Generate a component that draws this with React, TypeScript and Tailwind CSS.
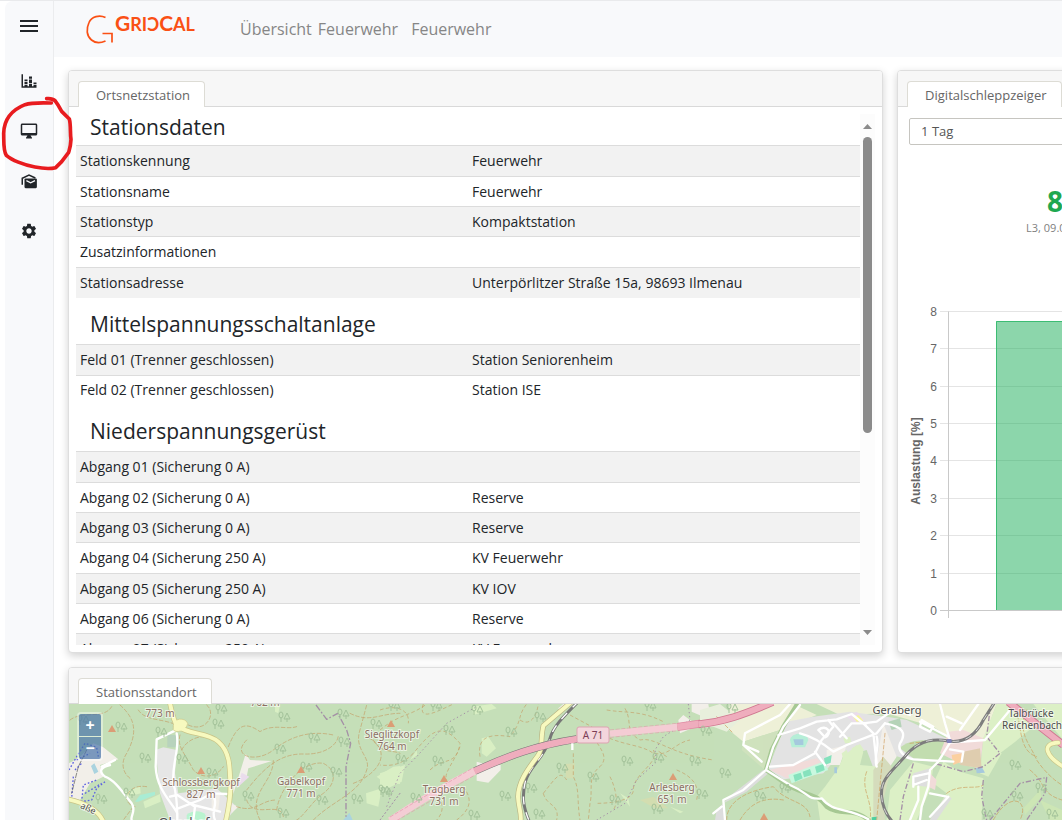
import React from 'react';
import { MdMenu, MdSettings } from 'react-icons/md';

type Row = {
  label: string;
  value: string;
};

type CardProps = {
  title: string;
  className?: string;
  children: React.ReactNode;
};

const stationRows: Row[] = [
  { label: 'Stationskennung', value: 'Feuerwehr' },
  { label: 'Stationsname', value: 'Feuerwehr' },
  { label: 'Stationstyp', value: 'Kompaktstation' },
  { label: 'Zusatzinformationen', value: '' },
  { label: 'Stationsadresse', value: 'Unterpörlitzer Straße 15a, 98693 Ilmenau' },
];

const mediumVoltageRows: Row[] = [
  { label: 'Feld 01 (Trenner geschlossen)', value: 'Station Seniorenheim' },
  { label: 'Feld 02 (Trenner geschlossen)', value: 'Station ISE' },
];

const lowVoltageRows: Row[] = [
  { label: 'Abgang 01 (Sicherung 0 A)', value: '' },
  { label: 'Abgang 02 (Sicherung 0 A)', value: 'Reserve' },
  { label: 'Abgang 03 (Sicherung 0 A)', value: 'Reserve' },
  { label: 'Abgang 04 (Sicherung 250 A)', value: 'KV Feuerwehr' },
  { label: 'Abgang 05 (Sicherung 250 A)', value: 'KV IOV' },
  { label: 'Abgang 06 (Sicherung 0 A)', value: 'Reserve' },
  { label: 'Abgang 07 (Sicherung 250 A)', value: 'KV Feuerwehr' },
];

const StackedBarIcon = () => (
  <svg viewBox="0 0 24 24" className="size-[18px]" fill="currentColor">
    <path d="M22,21H2V3H4V19H6V17H10V19H12V16H16V19H18V17H22V21M18,14H22V16H18V14M12,6H16V9H12V6M16,15H12V10H16V15M6,10H10V12H6V10M10,16H6V13H10V16Z" />
  </svg>
);

const MonitorIcon = () => (
  <svg viewBox="0 0 24 24" className="size-[18px]" fill="currentColor">
    <path
      fillRule="evenodd"
      d="M21 2H3C1.900 2 1 2.900 1 4v12c0 1.100.9 2 2 2h7l-2 3v1h8v-1l-2-3h7c1.100 0 2-.9 2-2V4c0-1.100-.9-2-2-2zM21 14.500H3V4h18v10.500z"
    />
  </svg>
);

const MailboxIcon = () => (
  <svg viewBox="0 0 24 24" className="size-[18px]" fill="none" stroke="currentColor">
    <path d="M3 17V8.300L12 4l8.500 4" strokeWidth="2" />
    <rect x="6" y="8.500" width="16.500" height="13" rx="1.500" fill="currentColor" stroke="none" />
    <path d="M8.500 11.500l5.700 3 5.800-3" stroke="#f8f9fb" strokeWidth="1.600" />
  </svg>
);

const Logo = () => (
  <svg className="h-9 w-[112px] overflow-visible" fill="none" role="img" aria-label="GridCal">
    <path
      d="M19.500 6.500C13.500 3.500 5.500 5.500 3 11.500C0 18 .5 25 5.500 29C9.500 32.500 15 32 19.500 30M16.500 22.500h9.500v9"
      stroke="#fa5014"
      strokeWidth="1.700"
    />
    <text
      x="29"
      y="20"
      fill="#fa5014"
      className="font-['Lato','Noto_Sans',sans-serif] text-[18px] font-bold">
      <tspan className="text-[21px]">G</tspan>RIƆ
      <tspan className="text-[21px]">C</tspan>AL
    </text>
  </svg>
);

const Sidebar = () => {
  const item = 'flex h-[50px] w-full items-center justify-center';
  return (
    <nav className="w-[49px] shrink-0 rounded-tl-lg border-r border-[#ebecee] bg-[#f8f9fb] text-[#212529]">
      <button className={`${item} mb-[5px]`} aria-label="Menü">
        <MdMenu className="size-6" />
      </button>
      <button className={item} aria-label="Auswertung">
        <StackedBarIcon />
      </button>
      <button className={item} aria-label="Übersicht">
        <MonitorIcon />
      </button>
      <button className={item} aria-label="Nachrichten">
        <MailboxIcon />
      </button>
      <button className={item} aria-label="Einstellungen">
        <MdSettings className="size-[18px]" />
      </button>
    </nav>
  );
};

const Card: React.FC<CardProps> = (props) => (
  <section
    className={`${props.className ?? ''} shrink-0 overflow-hidden rounded border border-[#dedede] bg-white shadow-[0_3px_8px_rgba(0,0,0,0.18)]`}>
    <div className="flex h-9 items-end border-b border-[#d9d9d9] bg-[#f7f7f7] pl-[9px]">
      <h2 className="-mb-px flex h-[26px] items-center rounded-t border border-b-0 border-[#dddcd5] bg-white pt-0.5 pr-3.5 pl-[17px] text-[13px] text-[#666]">
        {props.title}
      </h2>
    </div>
    {props.children}
  </section>
);

const RowTable: React.FC<{ title: string; rows: Row[]; first?: boolean }> = (props) => (
  <>
    <h3
      className={`flex items-center pl-3.5 text-[21px] leading-6 text-[#212529] ${
        props.first ? 'h-[31px] pb-1.5' : 'h-[46px] pt-1.5'
      }`}>
      {props.title}
    </h3>
    <table className="w-full table-fixed text-sm text-[#212529]">
      <tbody>
        {props.rows.map((row) => (
          <tr
            key={row.label}
            className="h-[30px] border-t border-[#dcdcdc] first:h-[31px] odd:bg-[#f2f2f2] nth-4:h-[31px]">
            <td className="px-1 py-0">{row.label}</td>
            <td className="px-1 py-0">{row.value}</td>
          </tr>
        ))}
      </tbody>
    </table>
  </>
);

const Scrollbar = () => (
  <div className="flex w-[15px] shrink-0 flex-col items-center bg-[#fcfcfc] py-2.5">
    <svg className="h-[5px] w-[9px]" fill="#8b8b8b">
      <path d="M4.500 0L9 5H0z" />
    </svg>
    <div className="mt-2 h-[58%] w-[9px] rounded-full bg-[#8b8b8b]" />
    <svg className="mt-auto h-[5px] w-[9px]" fill="#8b8b8b">
      <path d="M4.500 5L9 0H0z" />
    </svg>
  </div>
);

const LoadChart = () => {
  const ticks = [8, 7, 6, 5, 4, 3, 2, 1, 0];
  const yOf = (v: number) => Math.round(310 - v * 37.4) + 0.5;
  return (
    <svg className="h-[336px] w-full font-['Liberation_Sans',Arial,sans-serif] text-xs">
      {ticks.map((v) => (
        <g key={v}>
          <line
            x1="42"
            x2="100%"
            y1={yOf(v)}
            y2={yOf(v)}
            stroke={v === 0 ? '#c9c9c9' : '#e4e4e4'}
          />
          <text x="39" y={yOf(v) + 4} fill="#666" textAnchor="end">
            {v}
          </text>
        </g>
      ))}
      <line x1="50.500" x2="50.500" y1={yOf(8)} y2="318" stroke="#c9c9c9" />
      <rect x="98" y="21" width="100%" height="289" fill="#1aad57" fillOpacity="0.500" />
      <path d="M98.500 310V21.500H900" fill="none" stroke="#3cbc73" />
      <text transform="translate(22 161) rotate(-90)" fill="#666" textAnchor="middle" fontWeight="bold">
        Auslastung [%]
      </text>
    </svg>
  );
};

const treeSpots = [
  [83, 720], [221, 709], [284, 717], [218, 724], [343, 714], [161, 732], [145, 758], [182, 759],
  [212, 773], [280, 749], [306, 767], [336, 772], [248, 796], [101, 799], [129, 793], [322, 800],
  [357, 799], [384, 790], [283, 813], [376, 724], [344, 742], [121, 727], [314, 738], [394, 706],
  [436, 706], [477, 710], [449, 730], [511, 732], [540, 717], [401, 759], [438, 761], [416, 798],
  [386, 792], [505, 796], [562, 768], [593, 777], [615, 800], [531, 788], [627, 761], [658, 758],
  [695, 761], [702, 794], [650, 706], [539, 814], [474, 815], [657, 809], [725, 773], [760, 796],
  [785, 788], [706, 731], [1015, 765], [1017, 796], [1041, 788], [1052, 814], [987, 814], [732, 708],
];

const peaks = [
  [112, 729], [201, 771], [301, 770], [391, 724], [444, 779], [673, 777], [764, 817],
];

const labels = [
  { x: 160, y: 717, text: '773 m' },
  { x: 265, y: 706, text: '762 m' },
  { x: 201, y: 786, text: 'Schlossbergkopf' },
  { x: 201, y: 798, text: '827 m' },
  { x: 301, y: 785, text: 'Gabelkopf' },
  { x: 301, y: 797, text: '771 m' },
  { x: 392, y: 738, text: 'Sieglitzkopf' },
  { x: 392, y: 750, text: '764 m' },
  { x: 444, y: 793, text: 'Tragberg' },
  { x: 444, y: 805, text: '731 m' },
  { x: 672, y: 791, text: 'Arlesberg' },
  { x: 672, y: 803, text: '651 m' },
];

// Geometry of each map section is kept on a three times finer grid.
const MapWest = () => (
  <g transform="translate(-9 -44) scale(0.33333)" fill="none" strokeLinecap="round" strokeLinejoin="round">
    <path d="M27 310L60 290L100 250L130 262L175 298L120 315L130 350L90 370L60 420L27 410z" fill="#f2efe9" />
    <path d="M287 270L310 262L350 270L345 340L355 400L470 385L530 440L500 480H330L300 400z" fill="#e6e6e6" />
    <path d="M520 402L545 320L557 282L570 300L635 303L565 325L560 350L520 372z" fill="#f2efe9" />
    <path d="M455 400L480 405L475 450L455 455zM515 432L535 440L515 460z" fill="#f2efe9" />
    <path d="M545 338L568 350L530 385z" fill="#eadcec" />
    <path d="M322 225L350 225L348 262L322 262z" fill="#b9d3bd" />
    <path d="M225 425L240 405L285 395L285 405L235 425z" fill="#a9ecd4" />
    <path d="M190 400L240 378L242 400L200 412zM250 425L300 402L302 425L255 445z" fill="#d9efc4" />
    <path d="M950 350L1000 320L1020 318V372L975 370zM918 400L965 385L955 440L920 430zM645 135L660 135L655 160L645 155z" fill="#d9efc4" />
    <path d="M985 480L1020 455V480z" fill="#f5c6cf" />
    <path d="M850 480L868 458L878 480zM93 318L103 310L115 335L103 342z" fill="#aad3df" />
    <path d="M380 465C395 450 425 450 437 465L435 480H380z" fill="#b9f3cf" />
    <path d="M27 330L50 290L75 250L110 262L115 290M40 350L35 415M135 365L110 385L95 420L65 425L70 375L110 360M50 300L90 280M75 400L125 370M45 330L65 310" stroke="#5c62e0" strokeWidth="4" strokeLinecap="butt" strokeDasharray="5 6" />
    <path d="M80 270L55 320L35 400" stroke="#555" strokeWidth="2" strokeDasharray="14 5" />
    <g stroke="#c4995f" strokeWidth="2" strokeDasharray="11 7" opacity="0.900">
      <path d="M180 135C225 175 235 215 200 280C180 310 190 340 210 355M385 195C440 220 470 160 440 135" />
      <path d="M235 150C260 190 330 170 370 210M360 225C350 260 375 280 400 330C430 360 470 350 490 320" />
      <path d="M365 270C380 240 420 220 460 235M505 260C530 200 550 180 600 215C640 190 680 210 710 200" />
      <path d="M560 240C510 290 590 310 640 270C690 230 750 210 820 225M560 390C600 340 650 280 730 282C800 285 835 250 835 225" />
      <path d="M600 480C560 400 640 370 640 300M650 450C660 380 730 300 790 310C830 330 830 370 790 400C760 420 730 470 710 480" />
      <path d="M560 420C580 480 660 420 670 470M760 480C820 420 900 400 920 330C935 290 880 270 900 210L920 135" />
      <path d="M880 370C960 340 1000 270 920 230M870 160C930 190 960 160 1020 160M940 240C960 280 1000 270 1020 280" />
      <path d="M530 440C590 460 600 420 650 420M220 440L190 480M30 180C70 150 130 180 155 140M260 380C200 370 180 430 225 440" />
    </g>
    <path d="M768 135L800 178L833 160L860 210L872 250L858 320V470" stroke="#a48fa6" strokeWidth="4" strokeLinecap="butt" strokeDasharray="20 6 5 6" />
    <path d="M960 480L1020 400" stroke="#a48fa6" strokeWidth="3" strokeDasharray="4 8" />
    <g stroke="#fff" strokeWidth="7">
      <path d="M345 212L290 238L287 320C290 390 335 425 352 460V480M350 220C360 270 335 310 340 370C350 400 352 440 352 480" />
      <path d="M352 405L405 440L400 480M355 445L420 420L455 400L500 402M400 435L480 455M455 400C480 430 450 450 465 480M330 410L352 405" />
      <path d="M150 315C130 320 110 330 135 350C165 360 190 400 215 430C230 450 210 470 215 480M165 300L125 320" />
    </g>
    <g stroke="#c9c487" strokeWidth="16">
      <path d="M330 130C338 165 340 180 350 195C380 225 440 215 475 245C510 275 510 320 511 380C512 420 505 450 497 485" />
      <path d="M25 418C80 430 115 450 130 485" />
    </g>
    <path d="M340 195C340 175 375 170 383 190C380 215 345 220 340 210z" fill="#f7f9bf" stroke="#c9c487" strokeWidth="2" />
    <g stroke="#f7f9bf" strokeWidth="12">
      <path d="M330 130C338 165 340 180 350 195C380 225 440 215 475 245C510 275 510 320 511 380C512 420 505 450 497 485" />
      <path d="M25 418C80 430 115 450 130 485" />
    </g>
  </g>
);

const MapCenter = () => (
  <g transform="translate(311 -14) scale(0.33333)" fill="none" strokeLinejoin="round">
    <path d="M0 250L75 225L65 275L30 292L0 290zM305 145L325 140L348 175L320 200L305 190zM90 210L110 180L112 195z" fill="#d9efc4" />
    <path d="M275 50L335 42L350 55L280 75zM720 310L745 325L750 350zM870 350L910 365L900 370z" fill="#d9efc4" />
    <path d="M555 222L585 220L580 265L558 265zM780 330L820 320L865 355L825 355z" fill="#d3ddb0" />
    <path d="M290 215L325 225L362 225V240L325 278L290 272z" fill="#f2efe9" />
    <path d="M535 55L550 42L580 42L540 70zM935 42H985L988 60L965 78L935 65zM895 90L910 75L930 90L960 105L900 130z" fill="#f2efe9" />
    <g stroke="#c4995f" strokeWidth="2" strokeDasharray="11 7" opacity="0.900">
      <path d="M0 120C60 70 90 80 140 42M130 42C110 100 180 60 220 42M150 240C190 200 230 230 240 160C180 90 150 130 100 190" />
      <path d="M300 200C290 140 330 130 390 140C430 90 410 80 440 42M240 170C220 220 190 250 200 270M250 290C280 330 270 360 230 390" />
      <path d="M420 90C450 110 470 80 475 42M580 190V260C600 300 590 330 600 390M570 75L635 110C625 150 700 190 660 230C620 260 640 300 630 340L625 390" />
      <path d="M640 120C720 170 780 160 820 190C870 200 880 160 930 150M735 55C760 100 730 120 780 150C830 140 860 190 1000 210" />
      <path d="M820 180C840 220 760 250 760 300C760 330 700 340 650 340M680 60C740 70 780 60 850 95M860 200L830 180" />
      <path d="M490 310C530 260 540 240 560 270M490 310C500 350 540 340 530 390M100 190C70 220 40 230 0 225M130 320C170 280 210 350 170 390" />
      <path d="M690 260C700 280 720 330 700 360M890 240C940 260 960 290 950 330M0 60C50 42 90 60 85 100" />
    </g>
    <path d="M20 350L60 250L110 200L200 100L290 50M925 42L930 90L850 140L825 180L830 215L770 270L735 340L650 390" stroke="#a48fa6" strokeWidth="3" strokeDasharray="4 8" />
    <path d="M595 35C545 85 520 110 510 145C490 210 450 225 436 275C425 320 430 350 447 392" stroke="#777" strokeWidth="9" />
    <path d="M595 35C545 85 520 110 510 145C490 210 450 225 436 275C425 320 430 350 447 392" stroke="#fff" strokeWidth="4" strokeDasharray="24 24" />
    <path d="M575 35L490 107C480 150 490 170 475 195C450 230 415 270 414 320C415 350 425 370 422 392" stroke="#b9b583" strokeWidth="16" />
    <path d="M575 35L490 107C480 150 490 170 475 195C450 230 415 270 414 320C415 350 425 370 422 392" stroke="#f7f9bf" strokeWidth="12" />
    <path d="M30 392C100 345 190 290 285 243" stroke="#f4ccd4" strokeWidth="21" />
    <path d="M30 381L280 233M50 392L285 255M690 120L892 100M690 142L892 122" stroke="#e39aac" strokeWidth="2" strokeDasharray="12 5" />
    <path d="M285 243C380 200 470 165 590 147" stroke="#777" strokeWidth="23" />
    <path d="M283 244C380 200 470 165 592 147" stroke="#efadbd" strokeWidth="20" />
    <path d="M690 131L892 111" stroke="#f4ccd4" strokeWidth="19" />
    <path d="M892 111L1025 91" stroke="#e08ba3" strokeWidth="24" />
    <path d="M892 111L1025 91" stroke="#efadbd" strokeWidth="19" />
    <path d="M577 160V180" stroke="#fff" strokeWidth="7" />
  </g>
);

const MapEast = () => (
  <g transform="translate(631 -14) scale(0.33333)" fill="none" strokeLinecap="round" strokeLinejoin="round">
    <path d="M90 42L280 42L350 75L240 120L130 155L75 110z" fill="#eef0d8" />
    <path d="M350 42H890L850 150L760 150L700 110L560 70L420 75z" fill="#eef0d8" />
    <path d="M130 155L240 120L270 42L195 240L125 180z" fill="#cfe2bd" />
    <path d="M205 235L260 95L340 80L450 65L560 80L620 90L750 150L700 215L610 205L560 190L530 260L500 180L410 205L370 250L240 270z" fill="#e3e3e3" />
    <path d="M550 100L590 200L550 260L525 240zM380 180L440 165L420 225L380 225z" fill="#f2efe9" />
    <path d="M415 235L430 200L470 165L490 185L480 225L540 230L530 390H360L350 320L375 290z" fill="#dcf0c6" />
    <path d="M570 300L640 215L700 230L690 300L650 390H560zM730 215L780 245L850 265L845 390H690L740 310L700 280zM850 140L905 190L865 260L840 250z" fill="#dcf0c6" />
    <path d="M600 175C620 150 680 145 745 158L720 215L640 205z" fill="#c2ddb0" />
    <path d="M520 240L550 200L575 230L550 330L555 390H520z" fill="#d5dcbc" />
    <path d="M745 125L790 120L850 145L840 235L790 225L720 190z" fill="#f1dbd9" />
    <path d="M210 240L350 205L365 220L260 265zM690 250L710 270L705 300L685 290z" fill="#f1dbd9" />
    <path d="M780 225L790 185L840 175L845 235z" fill="#dfceb0" />
    <path d="M755 195L785 190L785 215L760 225z" fill="#fbd0a0" />
    <path d="M265 255L370 215L385 240L275 280z" fill="#c9f8df" />
    <path d="M280 255L302 248L308 265L285 275zM308 245L330 237L336 255L312 262zM345 230L370 222L374 240L350 250zM372 205L395 195L392 218L375 225z" fill="#86e2bd" />
    <path d="M270 150C275 125 320 125 325 150L315 172H275z" fill="#b5eed7" />
    <path d="M280 148H310V165H285zM35 65L55 58V72H38zM828 235L845 230L855 248L830 250zM403 232H411V250H403z" fill="#a6c9dd" />
    <path d="M440 80L470 65L495 90L465 100z" fill="#eadcec" />
    <path d="M460 82L475 75L490 92L470 95z" fill="#f6f59a" />
    <path d="M425 190L440 180L450 205L430 210zM455 175L480 162L492 180L470 200zM430 145L450 140L455 160L435 160z" fill="#dcf0c6" />
    <path d="M565 95L600 85L605 110L575 120z" fill="#b5d3b8" />
    <path d="M45 390L50 360L100 310L190 240L205 250L140 305L70 340L75 390z" fill="#dddddd" />
    <path d="M700 370L740 315L755 325L710 390H690zM640 250L690 235L680 290L635 285z" fill="#dedede" />
    <path d="M0 60L60 42L120 90L80 125L40 110L0 115z" fill="#e8efdc" />
    <path d="M890 42H930L1000 110L940 160L900 190L850 145z" fill="#dcf0c6" />
    <path d="M1000 42H1090V150z" fill="#dcf0c6" />
    <path d="M970 355L1020 300L1025 320L975 375zM1020 330L1086 360V390H1050z" fill="#cde6b5" />
    <g stroke="#cd9550" strokeWidth="2" strokeDasharray="11 7" opacity="0.900">
      <path d="M80 390C80 330 150 300 220 290C260 340 320 330 330 380M120 390C150 340 190 320 250 330M50 80L100 130" />
      <path d="M555 130L530 390M500 245C480 300 520 330 510 390M740 310C780 280 830 300 850 285M630 160L720 150" />
      <path d="M980 60C950 130 990 160 1010 210C1030 240 1060 270 1086 285M880 390C930 300 990 330 960 390M990 240C1040 280 1020 310 1086 330M940 42C970 100 950 180 1010 200" />
    </g>
    <path d="M710 222L790 245L850 230L900 190L860 140L870 60M850 270L845 320L860 390M640 220L610 320L600 390M870 390L960 280L1040 262L1035 310L980 390" stroke="#a48fa6" strokeWidth="4" strokeLinecap="butt" strokeDasharray="16 6 4 6" />
    <path d="M198 240L215 180L250 110L290 45M198 240L270 290C330 320 350 310 380 350C420 380 460 350 505 390" stroke="#a6c893" strokeWidth="13" />
    <g stroke="#fff" strokeWidth="7">
      <path d="M300 45L250 110L220 170L198 240L270 285C330 310 320 330 365 325C400 370 440 350 505 388" />
      <path d="M198 240L130 300L70 330L75 390M40 370L65 350M270 42L240 75L135 130L130 165L185 215M130 165L175 185" />
      <path d="M235 135L300 115L350 95L410 88L455 72L490 100L530 95L580 60L630 75M210 230L280 225L345 190L365 150L400 110L385 90" />
      <path d="M300 130C340 140 370 160 400 185L440 165L530 130L555 100M345 185L375 225M400 100L440 145M420 140L455 100L500 100M490 100L520 130L530 220" />
      <path d="M555 100C610 110 620 130 600 160C590 185 620 205 640 208L760 215M530 140C540 170 520 200 530 230M355 120C380 100 400 130 375 142z" />
      <path d="M720 42L735 100L750 150M665 90L700 110L690 125L660 110zM780 120L835 42M660 95L745 140M740 80L785 100" />
      <path d="M750 158L715 215L690 240L685 290L665 350L660 390M750 158L855 150L930 60M690 310L740 320M640 260L685 250M640 285L680 270M640 260V290M655 290L655 330L630 390M690 380L745 320M750 178L790 185L785 215" />
    </g>
    <path d="M882 40L850 90C820 150 780 158 745 153C680 140 640 165 610 205C570 250 540 270 545 320C548 355 560 375 575 392" stroke="#7d7d7d" strokeWidth="9" />
    <path d="M882 40L850 90C820 150 780 158 745 153C680 140 640 165 610 205C570 250 540 270 545 320C548 355 560 375 575 392" stroke="#fff" strokeWidth="2" strokeDasharray="18 22" />
    <rect x="740" y="147" width="15" height="12" rx="3" fill="#8082b8" />
    <path d="M515 382L530 380L528 392H515z" fill="#4fcf9f" />
    <g strokeLinecap="butt">
      <path d="M-5 103C70 95 130 75 218 36M925 36L1090 165" stroke="#cf7790" strokeWidth="23" />
      <path d="M-5 103C70 95 130 75 218 36M925 36L1090 165" stroke="#efadbd" strokeWidth="18" />
    </g>
    <path d="M1075 158C1020 160 1040 200 1090 230" stroke="#c9c487" strokeWidth="15" />
    <path d="M1075 158C1020 160 1040 200 1090 230" stroke="#f7f9bf" strokeWidth="11" />
  </g>
);

const StationMap = () => (
  <div className="relative h-[180px] overflow-hidden bg-[#c5dfb9]">
    <svg className="h-full w-full font-['Noto_Sans',sans-serif]">
      <defs>
        <g id="tree" fill="none" stroke="#a3c29a" strokeWidth="1">
          <path d="M-3 5V0M3 5V1" />
          <ellipse cx="-3" cy="-2" rx="2" ry="3" />
          <path d="M3-4L0 2h6z" />
        </g>
      </defs>
      <MapWest />
      <MapCenter />
      <MapEast />
      <g transform="translate(-69 -704)">
        {treeSpots.map(([x, y]) => (
          <use key={`${x}-${y}`} href="#tree" x={x} y={y} />
        ))}
        {peaks.map(([x, y]) => (
          <path key={`${x}-${y}`} d={`M${x - 4} ${y + 3}L${x} ${y - 4}L${x + 4} ${y + 3}z`} fill="#db9d76" />
        ))}
        <g
          className="text-[10px]"
          fill="#8c6f62"
          stroke="#fff"
          strokeOpacity="0.600"
          strokeWidth="2"
          paintOrder="stroke"
          textAnchor="middle">
          {labels.map((l) => (
            <text key={`${l.text}-${l.y}`} x={l.x} y={l.y}>
              {l.text}
            </text>
          ))}
          <g fill="#4d4d4d">
            <text x="897" y="714" className="text-[11px]">
              Geraberg
            </text>
            <text x="1031" y="717">Talbrücke</text>
            <text x="1032" y="729">Reichenbach</text>
            <text x="184" y="827" className="text-[13px]">
              Oberhof
            </text>
            <text transform="translate(87 811) rotate(25)" className="text-[9px]">
              aße
            </text>
          </g>
        </g>
        <rect x="577" y="727" width="32" height="16" rx="2" fill="#f3d6dc" stroke="#dda3b1" />
        <text x="593" y="739" fill="#7c3d56" textAnchor="middle" className="text-[10px]">
          A 71
        </text>
      </g>
    </svg>
    <div className="absolute top-2 left-2 flex flex-col gap-px rounded bg-white/40 p-0.5 text-base font-bold text-white">
      <button className="flex size-[22px] items-center justify-center rounded-t-xs bg-[#003c88]/50" aria-label="Vergrößern">
        +
      </button>
      <button className="flex size-[22px] items-center justify-center rounded-b-xs bg-[#003c88]/50" aria-label="Verkleinern">
        −
      </button>
    </div>
  </div>
);

// Freehand highlight around the monitor entry
const Marker = () => (
  <svg className="pointer-events-none absolute top-[89px] left-0 h-[90px] w-20" fill="none">
    <path
      transform="translate(0 -90) scale(0.33333)"
      d="M140 296C152 295 160 297 165 302C175 315 180 325 185 334L208 357C213 375 210 400 213 418C212 440 208 450 206 457L185 485L167 503C150 507 120 504 105 501C70 495 35 480 19 466C9 452 12 420 11 400C12 360 35 330 75 314C95 307 120 308 154 309"
      stroke="#e81c1f"
      strokeWidth="11"
      strokeLinecap="round"
      strokeLinejoin="round"
    />
  </svg>
);

const App = () => (
  <div className="relative flex h-screen overflow-hidden border-t border-[#e9eaec] bg-white pl-[5px] font-['Open_Sans',sans-serif]">
    <Sidebar />
    <div className="min-w-0 flex-1">
      <header className="flex h-14 items-center bg-[#f8f9fb] pl-8 text-base text-[#868686]">
        <Logo />
        <a href="#uebersicht" className="ml-[42px]">
          Übersicht
        </a>
        <a href="#feuerwehr" className="ml-1.5">
          Feuerwehr
        </a>
        <span className="ml-[13px]">Feuerwehr</span>
      </header>
      <main className="flex flex-col gap-3.5 pt-[13px] pl-3.5">
        <div className="flex gap-3.5">
          <Card title="Ortsnetzstation" className="w-[82%]">
            <div className="flex h-[545px] px-[7px] pt-[7px] pb-[7px]">
              <div className="min-w-0 flex-1 overflow-hidden">
                <RowTable title="Stationsdaten" rows={stationRows} first />
                <RowTable title="Mittelspannungsschaltanlage" rows={mediumVoltageRows} />
                <RowTable title="Niederspannungsgerüst" rows={lowVoltageRows} />
              </div>
              <Scrollbar />
            </div>
          </Card>
          <Card title="Digitalschleppzeiger" className="w-[82%]">
            <div className="px-[11px] pt-[11px]">
              <select
                aria-label="Zeitraum"
                className="h-[27px] w-full appearance-none rounded-xs border border-[#c6c5c0] bg-white px-[11px] text-[13px] text-[#555]">
                <option>1 Tag</option>
              </select>
            </div>
            <div className="pt-9 pl-32">
              <div className="pl-[21px] text-[28px] leading-10 font-bold text-[#1ea850]">8</div>
              <div className="text-[11px] leading-3.5 text-[#808080]">L3, 09.0</div>
            </div>
            <div className="pt-[65px]">
              <LoadChart />
            </div>
          </Card>
        </div>
        <Card title="Stationsstandort" className="w-[166%]">
          <StationMap />
        </Card>
      </main>
    </div>
    <Marker />
  </div>
);

export default App;
